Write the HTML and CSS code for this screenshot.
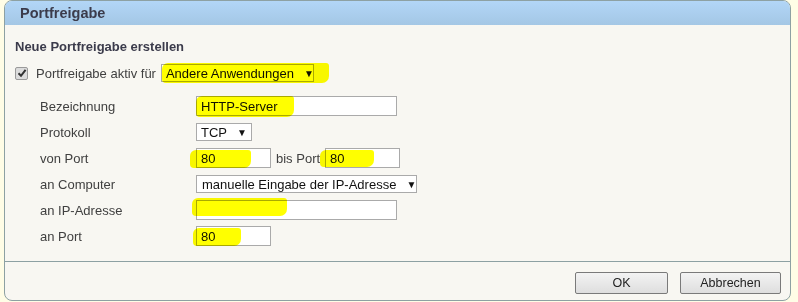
FILE: index.html
```html
<!doctype html>
<html>
  <head>
    <meta charset="utf-8">
    <title>Portfreigabe</title>
    <link rel="stylesheet" href="styles.css">
  </head>
  <body>
    <div class="dialog">
      <div class="dialog-head">Portfreigabe</div>
      <div class="dialog-body">
        <h2>Neue Portfreigabe erstellen</h2>
        <div class="active-row">
          <span class="check">
            <svg width="10" height="10" viewBox="0 0 10 10"><path d="M1.5 5.2 L4 7.8 L8.6 1.8" fill="none" stroke="#333" stroke-width="2"/></svg>
          </span>
          <label>Portfreigabe aktiv für</label>
          <span class="select app-select">Andere Anwendungen <i>▼</i></span>
        </div>
        <div class="form">
          <label>Bezeichnung</label>
          <div><span class="input wide">HTTP-Server</span></div>

          <label>Protokoll</label>
          <div><span class="select proto">TCP <i>▼</i></span></div>

          <label>von Port</label>
          <div class="ports">
            <span class="input short">80</span>
            <span class="between">bis Port</span>
            <span class="input short">80</span>
          </div>

          <label>an Computer</label>
          <div><span class="select computer">manuelle Eingabe der IP-Adresse <i>▼</i></span></div>

          <label>an IP-Adresse</label>
          <div><span class="input wide"></span></div>

          <label>an Port</label>
          <div><span class="input short">80</span></div>
        </div>
      </div>
      <div class="dialog-foot">
        <button class="btn ok">OK</button>
        <button class="btn cancel">Abbrechen</button>
      </div>

      <!-- marker strokes -->
      <span class="marker" style="left:157px;top:62px;width:167px;height:20px"></span>
      <span class="marker" style="left:191px;top:95px;width:98px;height:21px"></span>
      <span class="marker" style="left:185px;top:149px;width:61px;height:18px"></span>
      <span class="marker" style="left:315px;top:149px;width:54px;height:17px"></span>
      <span class="marker" style="left:187px;top:197px;width:95px;height:18px"></span>
      <span class="marker" style="left:188px;top:227px;width:48px;height:18px"></span>
    </div>
  </body>
</html>
```

FILE: styles.css
```css
body {
    margin: 0;
    background: #fffde6;
    font: 13px "Liberation Sans", Arial, sans-serif;
    color: #404040;
}
.dialog {
    position: relative;
    width: 785px;
    height: 299px;
    margin: 0 0 0 4px;
    border: 1px solid #8da1a3;
    border-radius: 8px;
    background: #f8f7f2;
    overflow: hidden;
}
.dialog-head {
    height: 24px;
    line-height: 24px;
    padding-left: 15px;
    background: linear-gradient(#b2d6f7, #a4c7e5);
    font-weight: bold;
    font-size: 14.5px;
    color: #3b3b4b;
}
.dialog-body {
    padding: 9px 10px 0 10px;
}
.dialog-body h2 {
    margin: 0;
    height: 26px;
    line-height: 26px;
    font-size: 13px;
    color: #3b3b4b;
}
.active-row {
    display: flex;
    align-items: center;
    height: 26px;
}
.check {
    display: inline-flex;
    align-items: center;
    justify-content: center;
    width: 11px;
    height: 11px;
    border: 1px solid #9a9a9a;
    border-radius: 2px;
    background: #dcdcdc;
    margin-right: 8px;
}
.active-row label {
    margin-right: 5px;
}
.form {
    display: grid;
    grid-template-columns: 156px auto;
    grid-auto-rows: 26px;
    align-items: center;
    margin-top: 7px;
    padding-left: 25px;
}
.form > label {
    padding-top: 1px;
}
.input, .select {
    display: inline-flex;
    align-items: center;
    box-sizing: border-box;
    border: 1px solid #aaa;
    background: #fff;
    color: #111;
    padding: 0 4px;
    vertical-align: middle;
    white-space: nowrap;
}
.input {
    height: 20px;
}
.wide { width: 201px; }
.short { width: 75px; }
.select {
    height: 18px;
    padding-right: 8px;
    justify-content: space-between;
}
.select i {
    font-style: normal;
    font-size: 10px;
    margin-left: 10px;
}
.app-select { width: 153px; }
.proto { width: 56px; }
.computer { width: 221px; padding-left: 5px; padding-right: 5px; }
.ports {
    display: flex;
    align-items: center;
}
.between {
    margin: 0 5px 0 5px;
}
.dialog-foot {
    border-top: 1px solid #8da1a3;
    margin-top: 12px;
    padding: 10px 9px 0 0;
    display: flex;
    justify-content: flex-end;
    gap: 12px;
}
.btn {
    height: 22px;
    border: 1px solid #7a7a7a;
    border-radius: 2px;
    background: linear-gradient(#f3f3f3, #dedede);
    font: 12.5px "Liberation Sans", Arial, sans-serif;
    color: #222;
}
.ok { width: 93px; }
.cancel { width: 101px; }
.marker {
    position: absolute;
    background: #ffff00;
    border-radius: 6px 3px 7px 4px;
    mix-blend-mode: multiply;
}
```
